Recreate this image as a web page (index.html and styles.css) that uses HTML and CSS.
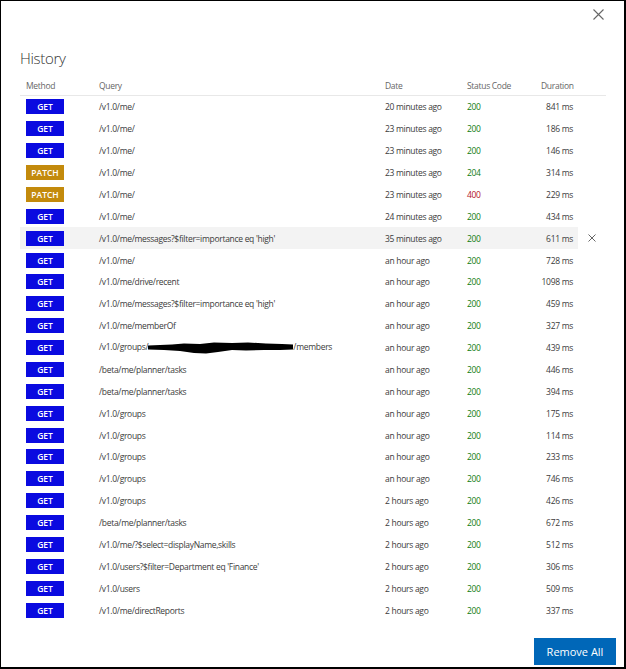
FILE: index.html
```html
<!DOCTYPE html>
<html lang="en">
<head>
    <meta charset="UTF-8">
    <title>History</title>
    <link rel="stylesheet" href="styles.css">
</head>
<body>

<div class="dialog">
    <button class="close-btn" aria-label="Close">
        <svg width="11" height="11" viewBox="0 0 11 11"><path d="M0.5 0.5 L10.5 10.5 M10.5 0.5 L0.5 10.5" stroke="#666" stroke-width="1.1" fill="none"/></svg>
    </button>

    <h1 class="title">History</h1>

    <table class="history">
        <thead>
            <tr>
                <th class="col-method">Method</th>
                <th class="col-query">Query</th>
                <th class="col-date">Date</th>
                <th class="col-status">Status Code</th>
                <th class="col-duration">Duration</th>
                <th class="col-action"></th>
            </tr>
        </thead>
        <tbody>
            <tr><td><span class="badge get">GET</span></td><td>/v1.0/me/</td><td>20 minutes ago</td><td class="ok">200</td><td class="dur">841 ms</td><td></td></tr>
            <tr><td><span class="badge get">GET</span></td><td>/v1.0/me/</td><td>23 minutes ago</td><td class="ok">200</td><td class="dur">186 ms</td><td></td></tr>
            <tr><td><span class="badge get">GET</span></td><td>/v1.0/me/</td><td>23 minutes ago</td><td class="ok">200</td><td class="dur">146 ms</td><td></td></tr>
            <tr><td><span class="badge patch">PATCH</span></td><td>/v1.0/me/</td><td>23 minutes ago</td><td class="ok">204</td><td class="dur">314 ms</td><td></td></tr>
            <tr><td><span class="badge patch">PATCH</span></td><td>/v1.0/me/</td><td>23 minutes ago</td><td class="fail">400</td><td class="dur">229 ms</td><td></td></tr>
            <tr><td><span class="badge get">GET</span></td><td>/v1.0/me/</td><td>24 minutes ago</td><td class="ok">200</td><td class="dur">434 ms</td><td></td></tr>
            <tr class="hovered"><td><span class="badge get">GET</span></td><td>/v1.0/me/messages?$filter=importance eq 'high'</td><td>35 minutes ago</td><td class="ok">200</td><td class="dur">611 ms</td>
                <td class="action"><svg width="8" height="8" viewBox="0 0 8 8"><path d="M0.5 0.5 L7.5 7.5 M7.5 0.5 L0.5 7.5" stroke="#666" stroke-width="1" fill="none"/></svg></td></tr>
            <tr><td><span class="badge get">GET</span></td><td>/v1.0/me/</td><td>an hour ago</td><td class="ok">200</td><td class="dur">728 ms</td><td></td></tr>
            <tr><td><span class="badge get">GET</span></td><td>/v1.0/me/drive/recent</td><td>an hour ago</td><td class="ok">200</td><td class="dur">1098 ms</td><td></td></tr>
            <tr><td><span class="badge get">GET</span></td><td>/v1.0/me/messages?$filter=importance eq 'high'</td><td>an hour ago</td><td class="ok">200</td><td class="dur">459 ms</td><td></td></tr>
            <tr><td><span class="badge get">GET</span></td><td>/v1.0/me/memberOf</td><td>an hour ago</td><td class="ok">200</td><td class="dur">327 ms</td><td></td></tr>
            <tr><td><span class="badge get">GET</span></td><td>/v1.0/groups/<svg class="redacted" width="145" height="12" viewBox="0 0 145 12"><path d="M0 3.5 L12 3 L24 2.5 L36 1.5 L52 2 L66 0.5 L84 1 L100 0.5 L118 1.5 L134 2 L145 2.5 L145 7.5 L132 8 L116 8 L98 8.5 L84 8 L70 10 L58 11.5 L46 11 L32 9 L16 8 L0 7.5 Z" fill="#000"/></svg>/members</td><td>an hour ago</td><td class="ok">200</td><td class="dur">439 ms</td><td></td></tr>
            <tr><td><span class="badge get">GET</span></td><td>/beta/me/planner/tasks</td><td>an hour ago</td><td class="ok">200</td><td class="dur">446 ms</td><td></td></tr>
            <tr><td><span class="badge get">GET</span></td><td>/beta/me/planner/tasks</td><td>an hour ago</td><td class="ok">200</td><td class="dur">394 ms</td><td></td></tr>
            <tr><td><span class="badge get">GET</span></td><td>/v1.0/groups</td><td>an hour ago</td><td class="ok">200</td><td class="dur">175 ms</td><td></td></tr>
            <tr><td><span class="badge get">GET</span></td><td>/v1.0/groups</td><td>an hour ago</td><td class="ok">200</td><td class="dur">114 ms</td><td></td></tr>
            <tr><td><span class="badge get">GET</span></td><td>/v1.0/groups</td><td>an hour ago</td><td class="ok">200</td><td class="dur">233 ms</td><td></td></tr>
            <tr><td><span class="badge get">GET</span></td><td>/v1.0/groups</td><td>an hour ago</td><td class="ok">200</td><td class="dur">746 ms</td><td></td></tr>
            <tr><td><span class="badge get">GET</span></td><td>/v1.0/groups</td><td>2 hours ago</td><td class="ok">200</td><td class="dur">426 ms</td><td></td></tr>
            <tr><td><span class="badge get">GET</span></td><td>/beta/me/planner/tasks</td><td>2 hours ago</td><td class="ok">200</td><td class="dur">672 ms</td><td></td></tr>
            <tr><td><span class="badge get">GET</span></td><td>/v1.0/me/?$select=displayName,skills</td><td>2 hours ago</td><td class="ok">200</td><td class="dur">512 ms</td><td></td></tr>
            <tr><td><span class="badge get">GET</span></td><td>/v1.0/users?$filter=Department eq 'Finance'</td><td>2 hours ago</td><td class="ok">200</td><td class="dur">306 ms</td><td></td></tr>
            <tr><td><span class="badge get">GET</span></td><td>/v1.0/users</td><td>2 hours ago</td><td class="ok">200</td><td class="dur">509 ms</td><td></td></tr>
            <tr><td><span class="badge get">GET</span></td><td>/v1.0/me/directReports</td><td>2 hours ago</td><td class="ok">200</td><td class="dur">337 ms</td><td></td></tr>
        </tbody>
    </table>

    <div class="footer">
        <button class="remove-btn">Remove All</button>
    </div>
</div>

</body>
</html>
```

FILE: styles.css
```css
body {
    font-family: "Open Sans", "Noto Sans", sans-serif;
    background-color: white;
    color: #333;
    margin: 0;
    padding: 0;
}

.dialog {
    position: relative;
    box-sizing: border-box;
    width: 626px;
    height: 669px;
    border: 1px solid #000;
    border-right-width: 2px;
    border-bottom-width: 2px;
    padding: 0 0 0 19px;
}

.close-btn {
    position: absolute;
    top: 7px;
    right: 20px;
    background: none;
    border: none;
    padding: 0;
    cursor: pointer;
}

.title {
    margin: 0;
    padding-top: 47px;
    padding-left: 0;
    font-size: 15px;
    font-weight: 300;
    letter-spacing: -0.3px;
    line-height: 20px;
    color: #333;
}

.history {
    border-collapse: collapse;
    margin-top: 7px;
    font-size: 8.5px;
    letter-spacing: -0.3px;
    table-layout: fixed;
    width: 586px;
}

.history th {
    height: 20px;
    padding: 0;
    font-weight: normal;
    text-align: left;
    color: #666;
    border-bottom: 1px solid #e8e8e8;
    vertical-align: middle;
}

.history td {
    height: 21.88px;
    padding: 0;
    vertical-align: middle;
    white-space: nowrap;
    color: #3b3b3b;
}

.col-method { width: 73px; }
.col-query { width: 286px; }
.col-date { width: 82px; }
.col-status { width: 74px; }
.col-duration { width: 32px; }
.col-action { width: 28px; }

.history th.col-method { padding-left: 6px; }
.history tr td:first-child { padding-left: 6px; }

.history th.col-duration,
.history td.dur {
    text-align: right;
    padding-right: 5px;
}

.history tr.hovered td {
    background-color: #f3f3f3;
}

.history tr.hovered td.action {
    background-color: white;
    padding-left: 10px;
}

.badge {
    display: inline-block;
    width: 38px;
    height: 15px;
    line-height: 15px;
    text-align: center;
    color: white;
    font-size: 8.5px;
    font-weight: 600;
    letter-spacing: 0;
    vertical-align: middle;
}

.badge.get {
    background-color: #0a0ae0;
}

.badge.patch {
    background-color: #c38a0c;
}

.history td.ok {
    color: #107c10;
}

.history td.fail {
    color: #b3121f;
}

.redacted {
    vertical-align: middle;
}

.footer {
    position: absolute;
    right: 8px;
    bottom: 2px;
}

.remove-btn {
    background-color: #0067b8;
    color: white;
    border: none;
    width: 82px;
    height: 27px;
    font-family: "Open Sans", "Noto Sans", sans-serif;
    font-size: 11px;
    cursor: pointer;
}
```
